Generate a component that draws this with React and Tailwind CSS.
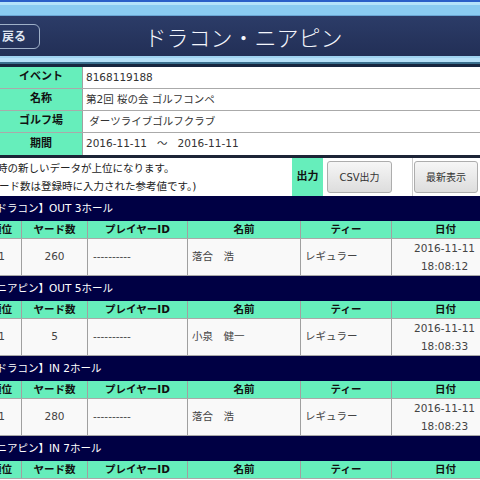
import React from 'react';

const cols = [
  { key: 'rank', label: '順位', w: 'w-[40px]', align: 'justify-center' },
  { key: 'yard', label: 'ヤード数', w: 'w-[66px]', align: 'justify-center' },
  { key: 'pid', label: 'プレイヤーID', w: 'w-[100px]', align: 'justify-start pl-[5px]' },
  { key: 'name', label: '名前', w: 'w-[113px]', align: 'justify-start pl-[4px]' },
  { key: 'tee', label: 'ティー', w: 'w-[91px]', align: 'justify-start pl-[4px]' },
  { key: 'date', label: '日付', w: 'w-[108px]', align: 'justify-center' },
];

const sections = [
  {
    title: '【ドラコン】OUT 3ホール',
    row: { rank: '1', yard: '260', pid: '----------', name: '落合　浩', tee: 'レギュラー', date: ['2016-11-11', '18:08:12'] },
  },
  {
    title: '【ニアピン】OUT 5ホール',
    row: { rank: '1', yard: '5', pid: '----------', name: '小泉　健一', tee: 'レギュラー', date: ['2016-11-11', '18:08:33'] },
  },
  {
    title: '【ドラコン】IN 2ホール',
    row: { rank: '1', yard: '280', pid: '----------', name: '落合　浩', tee: 'レギュラー', date: ['2016-11-11', '18:08:23'] },
  },
  { title: '【ニアピン】IN 7ホール', row: null },
];

const info = [
  { label: 'イベント', value: '8168119188' },
  { label: '名称', value: '第2回 桜の会 ゴルフコンペ' },
  { label: 'ゴルフ場', value: '\u00a0ダーツライブゴルフクラブ' },
  { label: '期間', value: '2016-11-11\u00a0\u00a0 ～\u00a0\u00a0 2016-11-11' },
];

function Section({ title, row }) {
  return (
    <div>
      <div className="h-[25px] bg-[#000044] flex items-center text-white text-[10.5px] -ml-[14px]">
        {title}
      </div>
      <div className="flex h-[18px] bg-[#66eebb] border-b border-[#a8a8a8] -ml-[18px] w-[518px]">
        {cols.map((c) => (
          <div
            key={c.key}
            className={`${c.w} shrink-0 flex items-center justify-center border-r border-[#a0a0a0] font-bold text-[10.5px] text-[#111]`}
          >
            {c.label}
          </div>
        ))}
      </div>
      {row && (
        <div className="flex h-[37px] bg-[#f9f9f9] border-b border-[#a8a8a8] -ml-[18px] w-[518px] text-[10.5px] text-[#444]">
          {cols.map((c) => (
            <div key={c.key} className={`${c.w} shrink-0 flex items-center ${c.align} border-r border-[#a0a0a0]`}>
              {c.key === 'date' ? (
                <div className="flex flex-col items-center leading-[18px] pr-[2px]">
                  <span>{row.date[0]}</span>
                  <span>{row.date[1]}</span>
                </div>
              ) : (
                row[c.key]
              )}
            </div>
          ))}
        </div>
      )}
    </div>
  );
}

export default function App() {
  return (
    <div className="w-[480px] h-[480px] overflow-hidden bg-white font-['DejaVu_Sans','Noto_Sans_CJK_JP',sans-serif]">
      {/* title bar */}
      <div className="h-[2px] bg-[#2a5fc8]" />
      <div className="h-[3px] bg-[#b4e2fa]" />
      <div className="h-[10px] bg-[#8acbf1]" />
      <div className="h-[1px] bg-[#6aa6d4]" />
      <div className="h-[40px] bg-gradient-to-b from-[#2c3c68] to-[#222f56] flex items-center">
        <div className="w-[40px] shrink-0 overflow-hidden flex items-center">
          <div className="-ml-[12px] w-[52px] shrink-0 h-[25px] rounded-[6px] border border-[#9fb0c8] flex items-center justify-center text-[12px] font-bold text-[#dfe6f2] font-['Noto_Sans_CJK_JP',sans-serif]">
            戻る
          </div>
        </div>
        <div className="flex-1 text-center pl-[7px] text-[22px] text-[#f4f6fc] font-['Noto_Sans_CJK_JP',sans-serif] font-light">
          ドラコン・ニアピン
        </div>
        <div className="w-[40px] shrink-0" />
      </div>
      <div className="h-[2px] bg-[#9fd2f0]" />
      <div className="h-[4px] bg-[#b6e0f8]" />
      <div className="h-[2px] bg-[#3a6f8e]" />
      <div className="h-[3px] bg-[#17263f]" />

      {/* event info */}
      <div className="border-b-[3px] border-[#1c2436]">
        {info.map((r, i) => (
          <div key={r.label} className={`flex h-[22px] ${i < info.length - 1 ? 'border-b border-[#aaaaaa]' : ''}`}>
            <div className="w-[83px] shrink-0 bg-[#66eebb] border-r border-[#a0a0a0] flex items-center justify-center font-bold text-[11px] text-[#111]">
              {r.label}
            </div>
            <div className="flex-1 flex items-center pl-[3px] text-[10.5px] text-[#333]">{r.value}</div>
          </div>
        ))}
      </div>

      {/* notice + output */}
      <div className="flex h-[38px]">
        <div className="flex-1 overflow-hidden flex flex-col justify-center text-[10.5px] leading-[18px] text-[#222]">
          <span className="-ml-[24px] whitespace-nowrap">登録時の新しいデータが上位になります。</span>
          <span className="-ml-[22px] whitespace-nowrap">（ヤード数は登録時に入力された参考値です。)</span>
        </div>
        <div className="w-[31px] shrink-0 bg-[#66eebb] flex items-center justify-center font-bold text-[11px] text-[#111]">
          出力
        </div>
        <div className="w-[89px] shrink-0 flex items-center pl-[4px]">
          <div className="w-[65px] h-[32px] rounded-[3px] border border-[#adadad] bg-gradient-to-b from-[#f6f6f6] to-[#dddddd] flex items-center justify-center text-[10px] text-[#333]">
            CSV出力
          </div>
        </div>
        <div className="flex-1 max-w-[68px] border-l border-[#cccccc] flex items-center pl-[1px]">
          <div className="w-[64px] h-[32px] rounded-[3px] border border-[#adadad] bg-gradient-to-b from-[#f6f6f6] to-[#dddddd] flex items-center justify-center text-[10px] text-[#333]">
            最新表示
          </div>
        </div>
      </div>

      {sections.map((s) => (
        <Section key={s.title} {...s} />
      ))}
    </div>
  );
}
